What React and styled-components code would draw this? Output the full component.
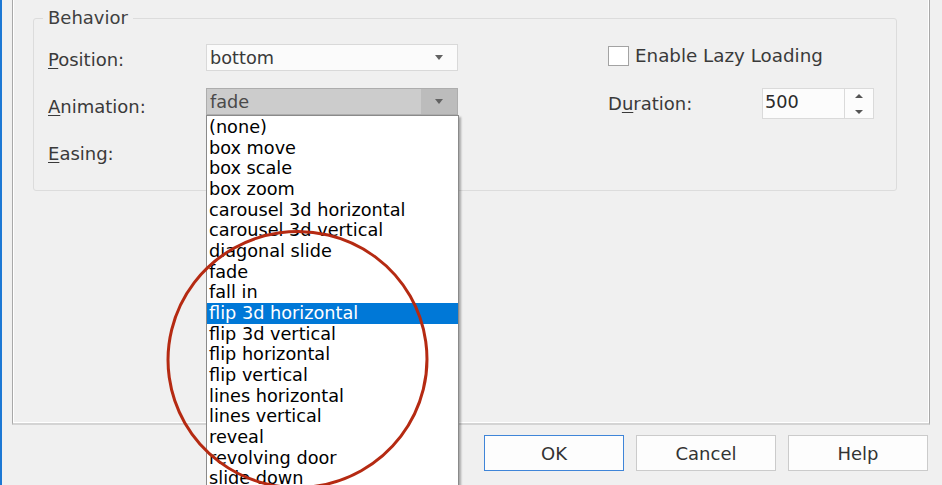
import React from 'react';
import styled, { createGlobalStyle } from 'styled-components';

const GlobalStyle = createGlobalStyle`
  html, body {
    margin: 0;
    padding: 0;
    background: #f0f0f0;
    overflow: hidden;
  }
`;

const Window = styled.div`
  position: relative;
  width: 942px;
  height: 485px;
  box-sizing: border-box;
  border-left: 2px solid #1c78d4;
  background: #f0f0f0;
  display: flex;
  flex-direction: column;
  overflow: hidden;
  font-family: 'DejaVu Sans', Verdana, sans-serif;
  color: #3a3a3a;
`;

const Panel = styled.div`
  flex-shrink: 0;
  margin-left: 10px;
  width: 918px;
  height: 425px;
  box-sizing: border-box;
  padding-top: 7px;
  border-left: 1px solid #a8a8a8;
  border-right: 1px solid #a8a8a8;
  border-bottom: 2px solid #d4d4d4;
  box-shadow: inset 1px 0 #fff, inset -1px 0 #fff, inset 0 -1px #fff;
`;

const GroupBox = styled.fieldset`
  margin: 0 0 0 20px;
  width: 864px;
  min-width: 0;
  box-sizing: border-box;
  padding: 0;
  border: 1px solid #dcdcdc;
  border-radius: 3px;
`;

const Legend = styled.legend`
  margin-left: 9px;
  padding: 0 5px;
  font-size: 18px;
  line-height: 22px;
  color: #404040;
`;

const GroupBody = styled.div`
  display: flex;
  align-items: flex-start;
  padding: 15px 0 25px 14px;
`;

const LabelColumn = styled.div`
  width: 158px;
  display: flex;
  flex-direction: column;
  gap: 25px;
  padding-top: 5px;
`;

const FieldLabel = styled.div`
  height: 22px;
  font-size: 18px;
  line-height: 22px;
  color: #3a3a3a;
  white-space: nowrap;
`;

const Key = styled.u`
  text-underline-offset: 2px;
`;

const ControlColumn = styled.div`
  width: 252px;
  display: flex;
  flex-direction: column;
  gap: 17px;
`;

const Combo = styled.div`
  position: relative;
  height: 27px;
  box-sizing: border-box;
  display: flex;
  border: 1px solid ${(p) => (p.$active ? '#adadad' : '#d9d9d9')};
  background: ${(p) => (p.$active ? '#cccccc' : '#fbfbfb')};
`;

const ComboText = styled.div`
  flex: 1;
  padding-left: 3px;
  font-size: 17.7px;
  line-height: 26px;
  color: ${(p) => (p.$active ? '#4a4a4a' : '#3a3a3a')};
`;

const DropButton = styled.div`
  width: 36px;
  display: flex;
  align-items: center;
  justify-content: center;
  background: ${(p) => (p.$active ? '#bcbcbc' : 'transparent')};
`;

const DownArrow = styled.span`
  width: 0;
  height: 0;
  border-left: 4px solid transparent;
  border-right: 4px solid transparent;
  border-top: 5px solid #626262;
`;

const DropList = styled.ul`
  position: absolute;
  top: calc(100% + 1px);
  left: -1px;
  width: 253px;
  box-sizing: border-box;
  margin: 0;
  padding: 1px 0 0;
  list-style: none;
  background: #fff;
  border: 1px solid #8a8a8a;
  box-shadow: 2px 2px 2px rgba(0, 0, 0, 0.3);
  z-index: 2;
`;

const ListItem = styled.li`
  height: 20.67px;
  line-height: 20.67px;
  padding-left: 2px;
  font-size: 17.7px;
  white-space: nowrap;
  color: ${(p) => (p.$selected ? '#fff' : '#000')};
  background: ${(p) => (p.$selected ? '#0078d7' : 'transparent')};
`;

const RightColumn = styled.div`
  margin-left: 150px;
  display: flex;
  flex-direction: column;
  gap: 22px;
  padding-top: 2px;
`;

const CheckRow = styled.div`
  display: flex;
  align-items: center;
  gap: 6px;
  height: 20px;
`;

const CheckBox = styled.span`
  width: 21px;
  height: 20px;
  box-sizing: border-box;
  border: 1px solid #a3a3a3;
  background: #fff;
`;

const CheckText = styled.span`
  font-size: 18.3px;
  line-height: 22px;
  color: #3a3a3a;
`;

const DurationRow = styled.div`
  display: flex;
  align-items: center;
  height: 31px;
`;

const DurationLabel = styled(FieldLabel)`
  width: 154px;
  padding-top: 1px;
`;

const NumberBox = styled.div`
  display: flex;
  width: 112px;
  height: 31px;
  box-sizing: border-box;
  border: 1px solid #dadada;
  background: #fcfcfc;
`;

const NumberField = styled.div`
  width: 79px;
  padding: 1px 0 0 2px;
  font-size: 17.7px;
  line-height: 24px;
  color: #2a2a2a;
`;

const Spinner = styled.div`
  flex: 1;
  border-left: 1px solid #dadada;
  display: flex;
  flex-direction: column;
  align-items: center;
  justify-content: center;
  gap: 12px;
`;

const SpinArrow = styled.span`
  width: 0;
  height: 0;
  border-left: 4.5px solid transparent;
  border-right: 4.5px solid transparent;
  ${(p) => (p.$up ? 'border-bottom: 4px solid #555;' : 'border-top: 4px solid #555;')}
`;

const Footer = styled.div`
  display: flex;
  justify-content: flex-end;
  gap: 12px;
  padding: 10px 14px 0 0;
`;

const Button = styled.button`
  width: 140px;
  height: 36px;
  box-sizing: border-box;
  padding: 0;
  border: 1px solid ${(p) => (p.$primary ? '#3f85d8' : '#cbcbcb')};
  background: #fdfdfd;
  font-family: inherit;
  font-size: 18px;
  color: #333;
`;

const Annotation = styled.svg`
  position: absolute;
  left: 0;
  top: 0;
  pointer-events: none;
  z-index: 5;
`;

const animations = [
  '(none)',
  'box move',
  'box scale',
  'box zoom',
  'carousel 3d horizontal',
  'carousel 3d vertical',
  'diagonal slide',
  'fade',
  'fall in',
  'flip 3d horizontal',
  'flip 3d vertical',
  'flip horizontal',
  'flip vertical',
  'lines horizontal',
  'lines vertical',
  'reveal',
  'revolving door',
  'slide down',
];

function ComboBox({ value, active, children }) {
  return (
    <Combo $active={active}>
      <ComboText $active={active}>{value}</ComboText>
      <DropButton $active={active}>
        <DownArrow />
      </DropButton>
      {children}
    </Combo>
  );
}

export default function App() {
  return (
    <>
      <GlobalStyle />
      <Window>
        <Panel>
          <GroupBox>
            <Legend>Behavior</Legend>
            <GroupBody>
              <LabelColumn>
                <FieldLabel>
                  <Key>P</Key>osition:
                </FieldLabel>
                <FieldLabel>
                  <Key>A</Key>nimation:
                </FieldLabel>
                <FieldLabel>
                  <Key>E</Key>asing:
                </FieldLabel>
              </LabelColumn>
              <ControlColumn>
                <ComboBox value="bottom" />
                <ComboBox value="fade" active>
                  <DropList>
                    {animations.map((a) => (
                      <ListItem key={a} $selected={a === 'flip 3d horizontal'}>
                        {a}
                      </ListItem>
                    ))}
                  </DropList>
                </ComboBox>
                <ComboBox value="" />
              </ControlColumn>
              <RightColumn>
                <CheckRow>
                  <CheckBox />
                  <CheckText>Enable Lazy Loading</CheckText>
                </CheckRow>
                <DurationRow>
                  <DurationLabel>
                    D<Key>u</Key>ration:
                  </DurationLabel>
                  <NumberBox>
                    <NumberField>500</NumberField>
                    <Spinner>
                      <SpinArrow $up />
                      <SpinArrow />
                    </Spinner>
                  </NumberBox>
                </DurationRow>
              </RightColumn>
            </GroupBody>
          </GroupBox>
        </Panel>
        <Footer>
          <Button $primary>OK</Button>
          <Button>Cancel</Button>
          <Button>Help</Button>
        </Footer>
        <Annotation width="940" height="485" viewBox="0 0 940 485">
          <ellipse
            cx="295.5"
            cy="359.5"
            rx="129.5"
            ry="128"
            fill="none"
            stroke="#b52a12"
            strokeWidth="3"
            transform="rotate(-8 295.5 359.5)"
          />
        </Annotation>
      </Window>
    </>
  );
}
